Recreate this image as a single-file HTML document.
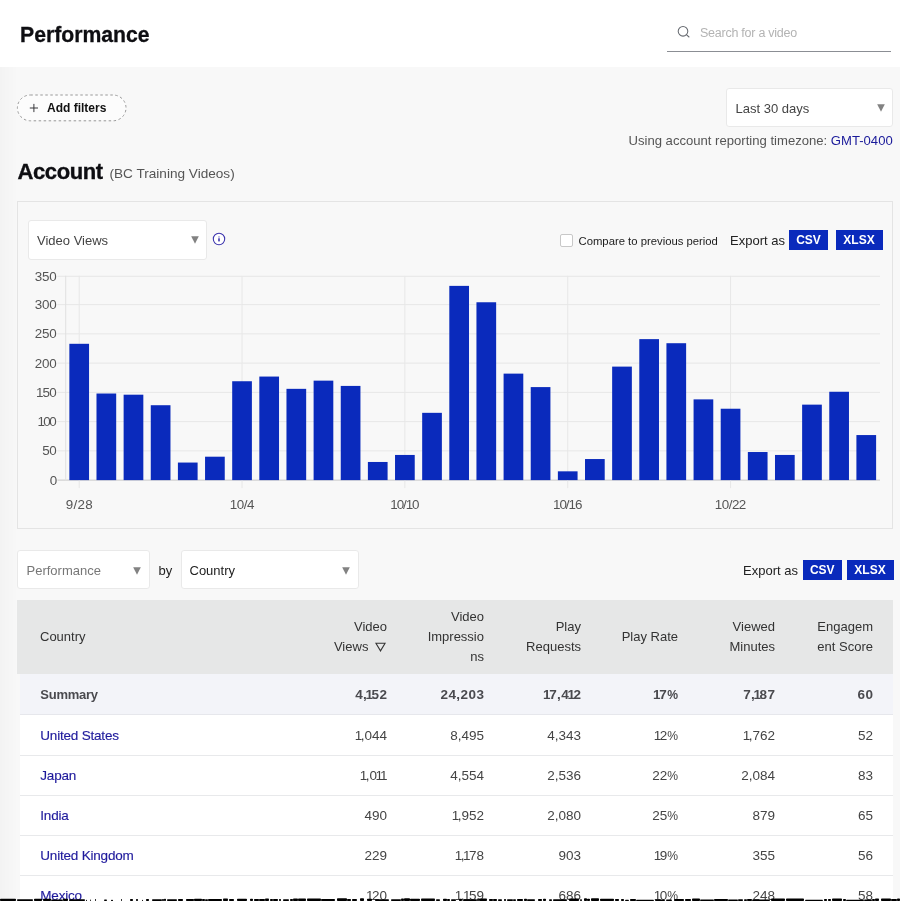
<!DOCTYPE html>
<html><head><meta charset="utf-8"><title>Performance</title>
<style>
*{box-sizing:border-box;margin:0;padding:0}
html,body{width:900px;height:901px;overflow:hidden;background:#f8f8f8;font-family:"Liberation Sans",sans-serif;color:#333}
.abs,.t,.row,.sel,.btn{position:absolute}
.t{white-space:nowrap;font-size:13px;line-height:16px}
.hdr{position:absolute;left:0;top:0;width:900px;height:67px;background:#fff}
.sel{background:#fff;border:1px solid #e9e9e9;border-radius:3px}
.arr{position:absolute;width:0;height:0;border-left:3.6px solid transparent;border-right:3.6px solid transparent;border-top:7px solid #838383}
.btn{background:#0a2abc;color:#fff;font-weight:700;font-size:12px;line-height:20px;text-align:center;height:20px;top:230px}
.ax{font-family:"Liberation Sans",sans-serif;font-size:13.4px;fill:#555}
.row{left:20px;width:873px;height:41px;background:#fff;border-bottom:1px solid #e8e9eb}
.lnk{color:#1f1a9c;font-size:13.5px;letter-spacing:-0.2px;-webkit-text-stroke:0.15px #1f1a9c}
.num{color:#444;text-align:right;font-size:13.5px}
.th{position:absolute;font-size:13px;line-height:20px;color:#333;text-align:right;white-space:nowrap}
</style></head><body>
<div id="root" style="position:absolute;left:0;top:0;width:900px;height:901px;overflow:hidden;will-change:transform">
<div class="abs" style="left:0;top:67px;width:18px;height:834px;background:linear-gradient(to right,rgba(0,0,0,0.02),rgba(0,0,0,0))"></div>
<div class="hdr"></div>
<div class="t" style="left:20px;top:21px;font-size:21px;line-height:26px;font-weight:700;color:#0e0e12;-webkit-text-stroke:0.3px #0e0e12;top:21.5px;font-size:21.2px">Performance</div>
<svg class="abs" style="left:676px;top:24px" width="16" height="16" viewBox="0 0 16 16"><circle cx="7" cy="7.3" r="4.8" fill="none" stroke="#666a70" stroke-width="1.05"/><path d="M10.4 10.7 L13 13" stroke="#666a70" stroke-width="1.05" stroke-linecap="round" fill="none"/></svg>
<div class="t" style="left:700px;top:25.2px;font-size:12.5px;letter-spacing:-0.25px;color:#b3b3b3">Search for a video</div>
<div class="abs" style="left:667px;top:51px;width:224px;height:1px;background:#8b8e94"></div>

<svg class="abs" style="left:16px;top:93px" width="112" height="30" viewBox="0 0 112 30"><rect x="1.4" y="2" width="108.6" height="25.8" rx="12.9" fill="#fcfcfc" stroke="#989898" stroke-width="1" stroke-dasharray="2.5 2.5"/></svg>
<svg class="abs" style="left:29px;top:102.5px" width="10" height="10" viewBox="0 0 10 10"><path d="M4.9 0.9 V9.1 M0.8 5 H9" stroke="#2e2e33" stroke-width="0.95"/></svg>
<div class="t" style="left:47px;top:100px;font-size:12px;font-weight:700;color:#111">Add filters</div>

<div class="sel" style="left:726px;top:88px;width:167px;height:39px"></div>
<div class="t" style="left:735.5px;top:100.5px;font-size:13px;color:#444">Last 30 days</div>
<svg class="abs" style="left:875.5px;top:103.1px" width="10" height="10" viewBox="0 0 10 10"><path d="M1.20 1.30 H8.80 L5 8.70 Z" fill="#828282"/></svg>
<div class="t" style="right:7.3px;top:132.5px;font-size:13.1px;color:#555">Using account reporting timezone: <span style="color:#1a1a9a">GMT-0400</span></div>

<div class="t" style="left:17.5px;top:158.6px;font-size:22px;letter-spacing:-0.4px;line-height:26px;font-weight:700;color:#0e0e12;-webkit-text-stroke:0.35px #0e0e12">Account</div>
<div class="t" style="left:109.5px;top:166.3px;font-size:13.6px;color:#555">(BC Training Videos)</div>

<div class="abs" style="left:17px;top:201px;width:876px;height:328px;border:1px solid #e4e4e4;background:#f8f8f8"></div>
<div class="sel" style="left:28px;top:220px;width:179px;height:39.5px"></div>
<div class="t" style="left:37px;top:233px;color:#444">Video Views</div>
<svg class="abs" style="left:189.6px;top:235.4px" width="10" height="10" viewBox="0 0 10 10"><path d="M1.20 1.30 H8.80 L5 8.70 Z" fill="#828282"/></svg>
<svg class="abs" style="left:212px;top:232px" width="14" height="14" viewBox="0 0 14 14"><circle cx="7" cy="7" r="5.7" fill="#fff" stroke="#3b33ad" stroke-width="1.05"/><rect x="6.2" y="6.3" width="1.6" height="3.1" fill="#3b33ad"/><rect x="6.3" y="4.3" width="1.4" height="1.3" fill="#8a85cf"/></svg>

<div class="abs" style="left:560px;top:234px;width:13px;height:13px;border:1px solid #c8c8c8;border-radius:2px;background:#fff"></div>
<div class="t" style="left:578.5px;top:233px;font-size:11.3px;color:#1c1c1c">Compare to previous period</div>
<div class="t" style="left:730px;top:232.5px;font-size:13px;color:#222">Export as</div>
<div class="btn" style="left:789px;width:39px">CSV</div>
<div class="btn" style="left:835.5px;width:47px">XLSX</div>

<svg class="abs" style="left:0;top:0" width="900" height="540" viewBox="0 0 900 540">
<rect x="57.5" y="479.60" width="822.5" height="1" fill="#c8c8c8"/>
<rect x="57.5" y="450.35" width="822.5" height="1" fill="#e7e7e7"/>
<rect x="57.5" y="421.10" width="822.5" height="1" fill="#e7e7e7"/>
<rect x="57.5" y="391.85" width="822.5" height="1" fill="#e7e7e7"/>
<rect x="57.5" y="362.60" width="822.5" height="1" fill="#e7e7e7"/>
<rect x="57.5" y="333.35" width="822.5" height="1" fill="#e7e7e7"/>
<rect x="57.5" y="304.10" width="822.5" height="1" fill="#e7e7e7"/>
<rect x="57.5" y="275.80" width="822.5" height="1" fill="#e7e7e7"/>
<rect x="65.2" y="275.8" width="1" height="204.30" fill="#e0e0e0"/>
<rect x="78.70" y="275.8" width="1" height="212.30" fill="#e7e7e7"/>
<rect x="241.54" y="275.8" width="1" height="212.30" fill="#e7e7e7"/>
<rect x="404.38" y="275.8" width="1" height="212.30" fill="#e7e7e7"/>
<rect x="567.22" y="275.8" width="1" height="212.30" fill="#e7e7e7"/>
<rect x="730.06" y="275.8" width="1" height="212.30" fill="#e7e7e7"/>
<rect x="69.35" y="343.80" width="19.7" height="136.30" fill="#0a2abc"/>
<rect x="96.49" y="393.52" width="19.7" height="86.58" fill="#0a2abc"/>
<rect x="123.63" y="394.69" width="19.7" height="85.41" fill="#0a2abc"/>
<rect x="150.77" y="405.22" width="19.7" height="74.88" fill="#0a2abc"/>
<rect x="177.91" y="462.55" width="19.7" height="17.55" fill="#0a2abc"/>
<rect x="205.05" y="456.70" width="19.7" height="23.40" fill="#0a2abc"/>
<rect x="232.19" y="381.24" width="19.7" height="98.86" fill="#0a2abc"/>
<rect x="259.33" y="376.56" width="19.7" height="103.54" fill="#0a2abc"/>
<rect x="286.47" y="388.84" width="19.7" height="91.26" fill="#0a2abc"/>
<rect x="313.61" y="380.65" width="19.7" height="99.45" fill="#0a2abc"/>
<rect x="340.75" y="385.92" width="19.7" height="94.18" fill="#0a2abc"/>
<rect x="367.89" y="461.97" width="19.7" height="18.13" fill="#0a2abc"/>
<rect x="395.03" y="454.95" width="19.7" height="25.15" fill="#0a2abc"/>
<rect x="422.17" y="412.83" width="19.7" height="67.27" fill="#0a2abc"/>
<rect x="449.31" y="285.88" width="19.7" height="194.22" fill="#0a2abc"/>
<rect x="476.45" y="302.26" width="19.7" height="177.84" fill="#0a2abc"/>
<rect x="503.59" y="373.63" width="19.7" height="106.47" fill="#0a2abc"/>
<rect x="530.73" y="387.09" width="19.7" height="93.02" fill="#0a2abc"/>
<rect x="557.87" y="471.33" width="19.7" height="8.77" fill="#0a2abc"/>
<rect x="585.01" y="459.04" width="19.7" height="21.06" fill="#0a2abc"/>
<rect x="612.15" y="366.61" width="19.7" height="113.49" fill="#0a2abc"/>
<rect x="639.29" y="339.12" width="19.7" height="140.98" fill="#0a2abc"/>
<rect x="666.43" y="343.21" width="19.7" height="136.89" fill="#0a2abc"/>
<rect x="693.57" y="399.37" width="19.7" height="80.73" fill="#0a2abc"/>
<rect x="720.71" y="408.73" width="19.7" height="71.37" fill="#0a2abc"/>
<rect x="747.85" y="452.02" width="19.7" height="28.08" fill="#0a2abc"/>
<rect x="774.99" y="454.95" width="19.7" height="25.15" fill="#0a2abc"/>
<rect x="802.13" y="404.64" width="19.7" height="75.46" fill="#0a2abc"/>
<rect x="829.27" y="391.77" width="19.7" height="88.33" fill="#0a2abc"/>
<rect x="856.41" y="435.06" width="19.7" height="45.04" fill="#0a2abc"/>
<text x="49.80" y="484.70" textLength="7.0" lengthAdjust="spacing" class="ax">0</text>
<text x="42.20" y="455.45" textLength="14.6" lengthAdjust="spacing" class="ax">50</text>
<text x="37.40" y="426.20" textLength="19.4" lengthAdjust="spacing" class="ax">100</text>
<text x="35.90" y="396.95" textLength="20.9" lengthAdjust="spacing" class="ax">150</text>
<text x="34.70" y="367.70" textLength="22.1" lengthAdjust="spacing" class="ax">200</text>
<text x="34.70" y="338.45" textLength="22.1" lengthAdjust="spacing" class="ax">250</text>
<text x="34.70" y="309.20" textLength="22.1" lengthAdjust="spacing" class="ax">300</text>
<text x="34.70" y="280.90" textLength="22.1" lengthAdjust="spacing" class="ax">350</text>
<text x="65.70" y="509" textLength="27" lengthAdjust="spacing" class="ax">9/28</text>
<text x="229.74" y="509" textLength="24.6" lengthAdjust="spacing" class="ax">10/4</text>
<text x="390.28" y="509" textLength="29.2" lengthAdjust="spacing" class="ax">10/10</text>
<text x="552.92" y="509" textLength="29.6" lengthAdjust="spacing" class="ax">10/16</text>
<text x="714.86" y="509" textLength="31.4" lengthAdjust="spacing" class="ax">10/22</text>
</svg>

<div class="sel" style="left:17px;top:550px;width:132.5px;height:39px"></div>
<div class="t" style="left:26.5px;top:563px;color:#777">Performance</div>
<svg class="abs" style="left:131.8px;top:565.5px" width="10" height="10" viewBox="0 0 10 10"><path d="M1.20 1.30 H8.80 L5 8.70 Z" fill="#828282"/></svg>
<div class="t" style="left:158.5px;top:563px;color:#222">by</div>
<div class="sel" style="left:180.5px;top:550px;width:178.5px;height:39px"></div>
<div class="t" style="left:189.5px;top:563px;color:#222">Country</div>
<svg class="abs" style="left:341.2px;top:565.5px" width="10" height="10" viewBox="0 0 10 10"><path d="M1.20 1.30 H8.80 L5 8.70 Z" fill="#828282"/></svg>
<div class="t" style="left:743px;top:563px;font-size:13px;color:#222">Export as</div>
<div class="btn" style="left:803px;width:38.5px;top:560px">CSV</div>
<div class="btn" style="left:846.5px;width:47px;top:560px">XLSX</div>

<div class="abs" style="left:17px;top:600px;width:876px;height:74px;background:#e6e7e7"></div>
<div class="th" style="left:40px;top:627px;text-align:left">Country</div>
<div class="th" style="right:513px;top:617px">Video<br>Views <svg width="11" height="10" viewBox="0 0 11 10" style="vertical-align:-1px;margin-left:3px;margin-right:1px"><path d="M0.9 1.2 H10.1 L5.5 8.9 Z" fill="none" stroke="#333" stroke-width="1.1" stroke-linejoin="miter"/></svg></div>
<div class="th" style="right:416px;top:607px">Video<br>Impressio<br>ns</div>
<div class="th" style="right:319px;top:617px">Play<br>Requests</div>
<div class="th" style="right:222px;top:627px">Play Rate</div>
<div class="th" style="right:125px;top:617px">Viewed<br>Minutes</div>
<div class="th" style="right:27px;top:617px">Engagem<br>ent Score</div>

<div class="abs" style="left:20px;top:674px;width:873px;height:41px;background:#f3f4f9;border-bottom:1px solid #e6e7ec"></div>
<div class="t" style="left:40.3px;top:686.5px;font-weight:700;color:#4a4a4f;letter-spacing:-0.25px">Summary</div>
<div class="t num" style="right:513px;top:686.5px;font-weight:700;color:#4a4a4f;letter-spacing:0.45px;margin-right:-0.45px">4,<span style="margin:0 -1.9px">1</span>52</div>
<div class="t num" style="right:416px;top:686.5px;font-weight:700;color:#4a4a4f;letter-spacing:0.45px;margin-right:-0.45px">24,203</div>
<div class="t num" style="right:319px;top:686.5px;font-weight:700;color:#4a4a4f;letter-spacing:0.45px;margin-right:-0.45px"><span style="margin:0 -1.9px">1</span>7,4<span style="margin:0 -1.9px">1</span>2</div>
<div class="t num" style="right:222px;top:686.5px;font-weight:700;color:#4a4a4f;letter-spacing:0.45px;margin-right:-0.45px"><span style="margin:0 -1.9px">1</span>7<span style="display:inline-block;transform:scaleX(0.9);transform-origin:right center;margin-left:-1.2px">%</span></div>
<div class="t num" style="right:125px;top:686.5px;font-weight:700;color:#4a4a4f;letter-spacing:0.45px;margin-right:-0.45px">7,<span style="margin:0 -1.9px">1</span>87</div>
<div class="t num" style="right:27px;top:686.5px;font-weight:700;color:#4a4a4f;letter-spacing:0.45px;margin-right:-0.45px">60</div>
<div class="row" style="top:715px;height:41px"></div>
<div class="t lnk" style="left:40.3px;top:728px">United States</div>
<div class="t num" style="right:513px;top:728px"><span style="margin:0 -1.5px">1</span>,044</div>
<div class="t num" style="right:416px;top:728px">8,495</div>
<div class="t num" style="right:319px;top:728px">4,343</div>
<div class="t num" style="right:222px;top:728px"><span style="margin:0 -1.5px">1</span>2<span style="display:inline-block;transform:scaleX(0.9);transform-origin:right center;margin-left:-1.2px">%</span></div>
<div class="t num" style="right:125px;top:728px"><span style="margin:0 -1.5px">1</span>,762</div>
<div class="t num" style="right:27px;top:728px">52</div>
<div class="row" style="top:756px;height:40px"></div>
<div class="t lnk" style="left:40.3px;top:768px">Japan</div>
<div class="t num" style="right:513px;top:768px"><span style="margin:0 -1.5px">1</span>,0<span style="margin:0 -1.5px">1</span><span style="margin:0 -0.6px 0 -1.5px">1</span></div>
<div class="t num" style="right:416px;top:768px">4,554</div>
<div class="t num" style="right:319px;top:768px">2,536</div>
<div class="t num" style="right:222px;top:768px">22<span style="display:inline-block;transform:scaleX(0.9);transform-origin:right center;margin-left:-1.2px">%</span></div>
<div class="t num" style="right:125px;top:768px">2,084</div>
<div class="t num" style="right:27px;top:768px">83</div>
<div class="row" style="top:796px;height:40px"></div>
<div class="t lnk" style="left:40.3px;top:808px">India</div>
<div class="t num" style="right:513px;top:808px">490</div>
<div class="t num" style="right:416px;top:808px"><span style="margin:0 -1.5px">1</span>,952</div>
<div class="t num" style="right:319px;top:808px">2,080</div>
<div class="t num" style="right:222px;top:808px">25<span style="display:inline-block;transform:scaleX(0.9);transform-origin:right center;margin-left:-1.2px">%</span></div>
<div class="t num" style="right:125px;top:808px">879</div>
<div class="t num" style="right:27px;top:808px">65</div>
<div class="row" style="top:836px;height:40px"></div>
<div class="t lnk" style="left:40.3px;top:848px">United Kingdom</div>
<div class="t num" style="right:513px;top:848px">229</div>
<div class="t num" style="right:416px;top:848px"><span style="margin:0 -1.5px">1</span>,<span style="margin:0 -1.5px">1</span>78</div>
<div class="t num" style="right:319px;top:848px">903</div>
<div class="t num" style="right:222px;top:848px"><span style="margin:0 -1.5px">1</span>9<span style="display:inline-block;transform:scaleX(0.9);transform-origin:right center;margin-left:-1.2px">%</span></div>
<div class="t num" style="right:125px;top:848px">355</div>
<div class="t num" style="right:27px;top:848px">56</div>
<div class="row" style="top:876px;height:40px"></div>
<div class="t lnk" style="left:40.3px;top:888px">Mexico</div>
<div class="t num" style="right:513px;top:888px"><span style="margin:0 -1.5px">1</span>20</div>
<div class="t num" style="right:416px;top:888px"><span style="margin:0 -1.5px">1</span>,<span style="margin:0 -1.5px">1</span>59</div>
<div class="t num" style="right:319px;top:888px">686</div>
<div class="t num" style="right:222px;top:888px"><span style="margin:0 -1.5px">1</span>0<span style="display:inline-block;transform:scaleX(0.9);transform-origin:right center;margin-left:-1.2px">%</span></div>
<div class="t num" style="right:125px;top:888px">248</div>
<div class="t num" style="right:27px;top:888px">58</div>
<svg class="abs" style="left:0;top:895px" width="900" height="6" viewBox="0 0 900 6"><rect x="0" y="3.8" width="16" height="2.2" rx="0.8" fill="#000"/><rect x="17" y="4.2" width="16" height="1.8" rx="0.8" fill="#000"/><rect x="34" y="3.8" width="8" height="2.2" rx="0.8" fill="#000"/><rect x="43" y="3.8" width="8" height="2.2" rx="0.8" fill="#000"/><rect x="51" y="4.4" width="12" height="1.6" rx="0.8" fill="#000"/><rect x="63" y="3.8" width="5" height="2.2" rx="0.8" fill="#000"/><rect x="69" y="4.2" width="16" height="1.8" rx="0.8" fill="#000"/><rect x="86" y="4.8" width="1" height="1.2" rx="0.8" fill="#000"/><rect x="90" y="4.4" width="1" height="1.6" rx="0.8" fill="#000"/><rect x="95" y="4.0" width="1" height="2.0" rx="0.8" fill="#000"/><rect x="104" y="4.4" width="3" height="1.6" rx="0.8" fill="#000"/><rect x="111" y="4.8" width="2" height="1.2" rx="0.8" fill="#000"/><rect x="121" y="4.0" width="1" height="2.0" rx="0.8" fill="#000"/><rect x="130" y="4.0" width="3" height="2.0" rx="0.8" fill="#000"/><rect x="136" y="4.0" width="2" height="2.0" rx="0.8" fill="#000"/><rect x="142" y="4.8" width="1" height="1.2" rx="0.8" fill="#000"/><rect x="146" y="4.0" width="3" height="2.0" rx="0.8" fill="#000"/><rect x="152" y="4.3" width="10" height="1.7" rx="0.8" fill="#000"/><rect x="162" y="4.1" width="2" height="1.9" rx="0.8" fill="#000"/><rect x="164" y="3.7" width="2" height="2.3" rx="0.8" fill="#000"/><rect x="167" y="4.3" width="10" height="1.7" rx="0.8" fill="#000"/><rect x="178" y="3.9" width="5" height="2.1" rx="0.8" fill="#000"/><rect x="186" y="3.9" width="8" height="2.1" rx="0.8" fill="#000"/><rect x="194" y="3.7" width="8" height="2.3" rx="0.8" fill="#000"/><rect x="202" y="4.1" width="3" height="1.9" rx="0.8" fill="#000"/><rect x="205" y="4.3" width="3" height="1.7" rx="0.8" fill="#000"/><rect x="208" y="4.1" width="14" height="1.9" rx="0.8" fill="#000"/><rect x="223" y="3.5" width="5" height="2.5" rx="0.8" fill="#000"/><rect x="229" y="4.1" width="5" height="1.9" rx="0.8" fill="#000"/><rect x="237" y="3.7" width="10" height="2.3" rx="0.8" fill="#000"/><rect x="250" y="3.7" width="3" height="2.3" rx="0.8" fill="#000"/><rect x="254" y="3.9" width="5" height="2.1" rx="0.8" fill="#000"/><rect x="259" y="4.1" width="6" height="1.9" rx="0.8" fill="#000"/><rect x="265" y="3.5" width="4" height="2.5" rx="0.8" fill="#000"/><rect x="270" y="4.1" width="3" height="1.9" rx="0.8" fill="#000"/><rect x="273" y="3.9" width="5" height="2.1" rx="0.8" fill="#000"/><rect x="279" y="3.9" width="2" height="2.1" rx="0.8" fill="#000"/><rect x="283" y="4.3" width="6" height="1.7" rx="0.8" fill="#000"/><rect x="290" y="4.1" width="3" height="1.9" rx="0.8" fill="#000"/><rect x="293" y="3.5" width="5" height="2.5" rx="0.8" fill="#000"/><rect x="298" y="3.5" width="8" height="2.5" rx="0.8" fill="#000"/><rect x="307" y="3.5" width="14" height="2.5" rx="0.8" fill="#000"/><rect x="321" y="4.1" width="14" height="1.9" rx="0.8" fill="#000"/><rect x="337" y="3.2" width="10" height="2.8" rx="0.8" fill="#000"/><rect x="347" y="4.1" width="4" height="1.9" rx="0.8" fill="#000"/><rect x="352" y="4.1" width="5" height="1.9" rx="0.8" fill="#000"/><rect x="360" y="3.2" width="4" height="2.8" rx="0.8" fill="#000"/><rect x="367" y="3.7" width="5" height="2.3" rx="0.8" fill="#000"/><rect x="375" y="4.3" width="14" height="1.7" rx="0.8" fill="#000"/><rect x="391" y="4.3" width="10" height="1.7" rx="0.8" fill="#000"/><rect x="401" y="3.5" width="3" height="2.5" rx="0.8" fill="#000"/><rect x="404" y="3.2" width="6" height="2.8" rx="0.8" fill="#000"/><rect x="410" y="3.7" width="10" height="2.3" rx="0.8" fill="#000"/><rect x="421" y="3.5" width="14" height="2.5" rx="0.8" fill="#000"/><rect x="436" y="4.3" width="4" height="1.7" rx="0.8" fill="#000"/><rect x="443" y="3.7" width="4" height="2.3" rx="0.8" fill="#000"/><rect x="447" y="4.1" width="3" height="1.9" rx="0.8" fill="#000"/><rect x="451" y="4.3" width="5" height="1.7" rx="0.8" fill="#000"/><rect x="459" y="3.7" width="3" height="2.3" rx="0.8" fill="#000"/><rect x="463" y="4.3" width="14" height="1.7" rx="0.8" fill="#000"/><rect x="477" y="3.9" width="2" height="2.1" rx="0.8" fill="#000"/><rect x="479" y="3.5" width="8" height="2.5" rx="0.8" fill="#000"/><rect x="489" y="3.9" width="4" height="2.1" rx="0.8" fill="#000"/><rect x="493" y="3.9" width="4" height="2.1" rx="0.8" fill="#000"/><rect x="498" y="4.3" width="4" height="1.7" rx="0.8" fill="#000"/><rect x="504" y="3.9" width="2" height="2.1" rx="0.8" fill="#000"/><rect x="507" y="4.3" width="6" height="1.7" rx="0.8" fill="#000"/><rect x="513" y="4.3" width="3" height="1.7" rx="0.8" fill="#000"/><rect x="517" y="4.1" width="6" height="1.9" rx="0.8" fill="#000"/><rect x="524" y="3.7" width="3" height="2.3" rx="0.8" fill="#000"/><rect x="527" y="4.3" width="8" height="1.7" rx="0.8" fill="#000"/><rect x="538" y="3.9" width="4" height="2.1" rx="0.8" fill="#000"/><rect x="543" y="3.7" width="3" height="2.3" rx="0.8" fill="#000"/><rect x="549" y="4.3" width="3" height="1.7" rx="0.8" fill="#000"/><rect x="553" y="4.3" width="14" height="1.7" rx="0.8" fill="#000"/><rect x="569" y="3.5" width="10" height="2.5" rx="0.8" fill="#000"/><rect x="580" y="4.3" width="2" height="1.7" rx="0.8" fill="#000"/><rect x="584" y="3.2" width="3" height="2.8" rx="0.8" fill="#000"/><rect x="587" y="3.7" width="3" height="2.3" rx="0.8" fill="#000"/><rect x="591" y="3.2" width="8" height="2.8" rx="0.8" fill="#000"/><rect x="600" y="3.7" width="14" height="2.3" rx="0.8" fill="#000"/><rect x="615" y="3.9" width="4" height="2.1" rx="0.8" fill="#000"/><rect x="621" y="3.9" width="3" height="2.1" rx="0.8" fill="#000"/><rect x="625" y="4.7" width="4" height="1.3" rx="0.8" fill="#000"/><rect x="630" y="4.1" width="6" height="1.9" rx="0.8" fill="#000"/><rect x="636" y="4.7" width="18" height="1.3" rx="0.8" fill="#000"/><rect x="655" y="4.5" width="10" height="1.5" rx="0.8" fill="#000"/><rect x="666" y="4.5" width="6" height="1.5" rx="0.8" fill="#000"/><rect x="674" y="4.1" width="10" height="1.9" rx="0.8" fill="#000"/><rect x="685" y="4.1" width="6" height="1.9" rx="0.8" fill="#000"/><rect x="692" y="3.6" width="8" height="2.4" rx="0.8" fill="#000"/><rect x="700" y="4.5" width="14" height="1.5" rx="0.8" fill="#000"/><rect x="714" y="3.9" width="14" height="2.1" rx="0.8" fill="#000"/><rect x="728" y="4.5" width="10" height="1.5" rx="0.8" fill="#000"/><rect x="738" y="4.3" width="5" height="1.7" rx="0.8" fill="#000"/><rect x="744" y="4.3" width="3" height="1.7" rx="0.8" fill="#000"/><rect x="747" y="4.1" width="5" height="1.9" rx="0.8" fill="#000"/><rect x="752" y="4.5" width="18" height="1.5" rx="0.8" fill="#000"/><rect x="771" y="3.6" width="14" height="2.4" rx="0.8" fill="#000"/><rect x="786" y="3.6" width="18" height="2.4" rx="0.8" fill="#000"/><rect x="805" y="4.7" width="18" height="1.3" rx="0.8" fill="#000"/><rect x="824" y="3.9" width="3" height="2.1" rx="0.8" fill="#000"/><rect x="828" y="3.9" width="3" height="2.1" rx="0.8" fill="#000"/><rect x="832" y="3.6" width="10" height="2.4" rx="0.8" fill="#000"/><rect x="843" y="4.1" width="3" height="1.9" rx="0.8" fill="#000"/><rect x="846" y="4.7" width="18" height="1.3" rx="0.8" fill="#000"/><rect x="864" y="4.5" width="8" height="1.5" rx="0.8" fill="#000"/><rect x="872" y="4.1" width="3" height="1.9" rx="0.8" fill="#000"/><rect x="875" y="3.6" width="4" height="2.4" rx="0.8" fill="#000"/><rect x="881" y="3.6" width="10" height="2.4" rx="0.8" fill="#000"/><rect x="891" y="4.1" width="6" height="1.9" rx="0.8" fill="#000"/><rect x="897" y="3.6" width="3" height="2.4" rx="0.8" fill="#000"/></svg>
</div>
</body></html>
